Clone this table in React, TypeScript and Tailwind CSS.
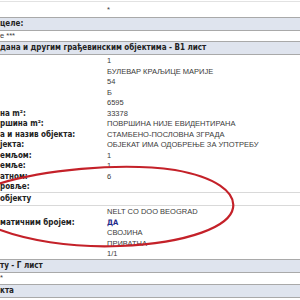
const label = "font-['DejaVu_Sans_Condensed','DejaVu_Sans',sans-serif] font-bold text-[8px] text-[#222] whitespace-nowrap"
const value = "font-['Liberation_Sans',Arial,sans-serif] text-[7.5px] text-[#3a3a3a] whitespace-nowrap"

const Header = ({ text }: { text: string }) => (
  <div className={`h-[14px] border-y border-[#a9a9a9] bg-[#dfe4ee] flex items-center ${label}`}>
    {text}
  </div>
)

const Row = ({ l = '', v = '', strong = false }: { l?: string; v?: string; strong?: boolean }) => (
  <div className="h-[10.5px] grid grid-cols-[107px_1fr] items-center">
    <span className={label}>{l}</span>
    <span className={strong ? "font-['DejaVu_Sans_Condensed','DejaVu_Sans',sans-serif] font-bold text-[7.5px] text-[#1f2a8a]" : value}>{v}</span>
  </div>
)

const rows: [string, string][] = [
  ['', '1'],
  ['', 'БУЛЕВАР КРАЉИЦЕ МАРИЈЕ'],
  ['', '54'],
  ['', 'Б'],
  ['', '6595'],
  ['на m²:', '33378'],
  ['ршина m²:', 'ПОВРШИНА НИЈЕ ЕВИДЕНТИРАНА'],
  ['а и назив објекта:', 'СТАМБЕНО-ПОСЛОВНА ЗГРАДА'],
  ['јекта:', 'ОБЈЕКАТ ИМА ОДОБРЕЊЕ ЗА УПОТРЕБУ'],
  ['емљом:', '1'],
  ['емље:', '1'],
  ['атном:', '6'],
  ['ровље:', ''],
]

export default function App() {
  return (
    <div className="relative w-[300px] h-[300px] overflow-hidden bg-white">
      <div className="mt-px border-t border-[#e2e2e2]">
        <div className="h-[15px] grid grid-cols-[107px_1fr] items-center">
          <span />
          <span className={value}>*</span>
        </div>
        <Header text="целе:" />
        <div className={`h-[10px] flex items-center ${value}`}>е ***</div>
        <Header text="дана и другим грађевинским објектима - В1 лист" />
        {rows.map(([l, v], i) => (
          <Row key={i} l={l} v={v} />
        ))}
        <div className={`h-[14px] mt-[0.5px] border-y border-[#d9d9d9] flex items-center ${label}`}>објекту</div>
        <Row v="NELT CO DOO BEOGRAD" />
        <Row l="матичним бројем:" v="ДА" strong />
        <Row v="СВОЈИНА" />
        <Row v="ПРИВАТНА" />
        <Row v="1/1" />
        <Header text="ту - Г лист" />
        <div className={`h-[11px] flex items-center ${value}`}>*</div>
        <Header text="кта" />
        <div className={`h-[10px] flex items-center ${value}`}>е ***</div>
      </div>
      <svg className="absolute inset-0 pointer-events-none" width="300" height="300" viewBox="0 0 300 300">
        <path
          d="M -5 185 C 40 170, 120 162, 175 170 C 215 177, 236 192, 233 208 C 230 226, 190 243, 120 246 C 70 248, 25 240, -5 228"
          fill="none"
          stroke="#c42129"
          strokeWidth="2.2"
          strokeLinecap="round"
        />
      </svg>
    </div>
  )
}
